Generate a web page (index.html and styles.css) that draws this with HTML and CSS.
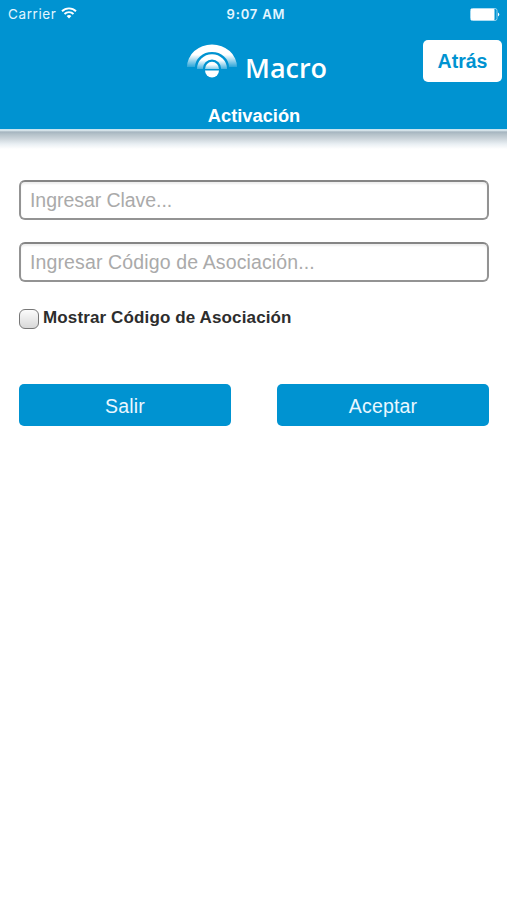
FILE: index.html
```html
<!DOCTYPE html>
<html lang="es">
<head>
    <meta charset="UTF-8">
    <title>Macro</title>
    <link rel="stylesheet" href="styles.css">
</head>
<body>
    <header class="header">
        <div class="status-bar">
            <div class="carrier">
                <span>Carrier</span>
                <svg class="wifi" width="16" height="12" viewBox="0 0 16 12" fill="none" stroke="#fff" stroke-width="1.9">
                    <path d="M1 4.2a10 10 0 0 1 14 0"/>
                    <path d="M3.5 7a6.4 6.4 0 0 1 9 0"/>
                    <path d="M8 11.5L5.6 9.1a3.4 3.4 0 0 1 4.8 0z" fill="#fff" stroke="none"/>
                </svg>
            </div>
            <span class="time">9:07 AM</span>
            <svg class="battery" width="30" height="13" viewBox="0 0 30 13">
                <rect x="0.5" y="0.5" width="26.5" height="12" rx="2" fill="none" stroke="#8fd0ee"/>
                <rect x="0.8" y="0.8" width="23.7" height="11.4" rx="1" fill="#fff"/>
                <path d="M28 4.4q2.6 2.1 0 4.2z" fill="#fff"/>
            </svg>
        </div>
        <div class="nav">
            <div class="logo">
                <svg width="52" height="36" viewBox="0 0 52 36">
                    <defs>
                        <linearGradient id="outer" gradientUnits="userSpaceOnUse" x1="0" y1="0" x2="0" y2="24">
                            <stop offset="0.45" stop-color="#fff"/>
                            <stop offset="1" stop-color="#fff" stop-opacity="0.1"/>
                        </linearGradient>
                        <linearGradient id="inner" gradientUnits="userSpaceOnUse" x1="0" y1="9" x2="0" y2="27">
                            <stop offset="0.4" stop-color="#fff"/>
                            <stop offset="1" stop-color="#fff" stop-opacity="0.1"/>
                        </linearGradient>
                        <linearGradient id="core" x1="0" y1="0" x2="0" y2="1">
                            <stop offset="0.4" stop-color="#fff"/>
                            <stop offset="1" stop-color="#fff" stop-opacity="0.55"/>
                        </linearGradient>
                    </defs>
                    <path d="M1 23A25 22.5 0 0 1 51 23H43A17 15 0 0 0 9 23z" fill="url(#outer)"/>
                    <path d="M11 25A15 14.8 0 0 1 41 25H35.2A9.2 9.6 0 0 0 16.8 25z" fill="url(#inner)"/>
                    <path d="M19 25a7 7.2 0 0 1 14 0z" fill="url(#core)"/>
                    <path d="M19 26.6h14a7 6.9 0 0 1-14 0z" fill="#fff"/>
                </svg>
                <span class="brand">Macro</span>
            </div>
            <button class="back">Atrás</button>
        </div>
        <h1 class="title">Activación</h1>
    </header>
    <div class="header-shadow"></div>

    <form class="form">
        <input class="field" type="password" placeholder="Ingresar Clave...">
        <input class="field field-code" type="password" placeholder="Ingresar Código de Asociación...">
        <label class="show-code">
            <input class="checkbox" type="checkbox">
            <span>Mostrar Código de Asociación</span>
        </label>
        <div class="actions">
            <button class="button" type="button">Salir</button>
            <button class="button" type="button">Aceptar</button>
        </div>
    </form>
</body>
</html>
```

FILE: styles.css
```css
* {
    box-sizing: border-box;
}
body {
    margin: 0;
    min-height: 100vh;
    background-color: #fff;
    font-family: "Liberation Sans", Arial, sans-serif;
}
.header {
    height: 129px;
    background-color: #0093d1;
    color: #fff;
}
.status-bar {
    display: grid;
    grid-template-columns: 1fr auto 1fr;
    align-items: center;
    height: 28px;
    padding: 0 7px 0 8px;
    font-family: Inter, sans-serif;
    font-size: 13px;
}
.carrier {
    display: flex;
    align-items: center;
    gap: 5px;
    color: #e3f6ff;
    font-size: 13.5px;
    letter-spacing: 0.6px;
}
.wifi {
    margin-top: -2px;
}
.time {
    padding-left: 4px;
    color: #e3f6ff;
    font-weight: 600;
    letter-spacing: 0.85px;
}
.battery {
    justify-self: end;
}
.nav {
    display: grid;
    grid-template-columns: 186px 1fr 79px;
    height: 72px;
    padding: 12px 5px 0 0;
}
.logo {
    grid-column: 2;
    display: flex;
    gap: 7px;
    padding-top: 4px;
}
.brand {
    font-family: "Open Sans", sans-serif;
    font-size: 27px;
    font-weight: 600;
    line-height: 48px;
}
.back {
    height: 42px;
    padding: 0;
    border: none;
    border-radius: 5px;
    background-color: #fff;
    color: #0093d1;
    font-family: inherit;
    font-size: 19.5px;
    font-weight: bold;
}
.title {
    margin: 0;
    padding: 1px 0 0 1px;
    text-align: center;
    font-size: 18.3px;
    line-height: 30px;
}
.header-shadow {
    height: 20px;
    background: linear-gradient(#a9d5e8 0, #e4f1f6 1px, #a5b5bf 3px, #b3c0c8 5px, #cdd6dc 10px, #e9eff3 15px, #fff 20px);
}
.form {
    padding: 31px 18px 0 19px;
}
.field {
    display: block;
    width: 100%;
    height: 40px;
    margin: 0 0 22px;
    padding: 0 9px;
    border: 2px solid #939393;
    border-top-color: #858585;
    border-radius: 6px;
    background-color: #fff;
    box-shadow: inset 0 2px 2px #eee;
    font-family: inherit;
    font-size: 19.5px;
    letter-spacing: -0.05px;
}
.field-code {
    letter-spacing: 0.13px;
}
.field::placeholder {
    color: #aaa;
}
.show-code {
    display: flex;
    gap: 4px;
    height: 22px;
    margin-top: 26px;
    color: #2d2d2d;
    font-size: 17px;
    font-weight: bold;
    letter-spacing: 0.13px;
    line-height: 20px;
}
.checkbox {
    appearance: none;
    width: 20px;
    height: 20px;
    margin: 1px 0 0;
    border: 1.5px solid #777;
    border-radius: 6px;
    background: linear-gradient(#fcfcfc, #d8d8d8);
}
.actions {
    display: grid;
    grid-template-columns: 1fr 1fr;
    gap: 46px;
    margin-top: 54px;
}
.button {
    height: 42px;
    padding: 2px 0 0;
    border: none;
    border-radius: 5px;
    background-color: #0093d1;
    color: #e9f7ff;
    font-family: inherit;
    font-size: 19.5px;
    letter-spacing: 0.15px;
}
```
